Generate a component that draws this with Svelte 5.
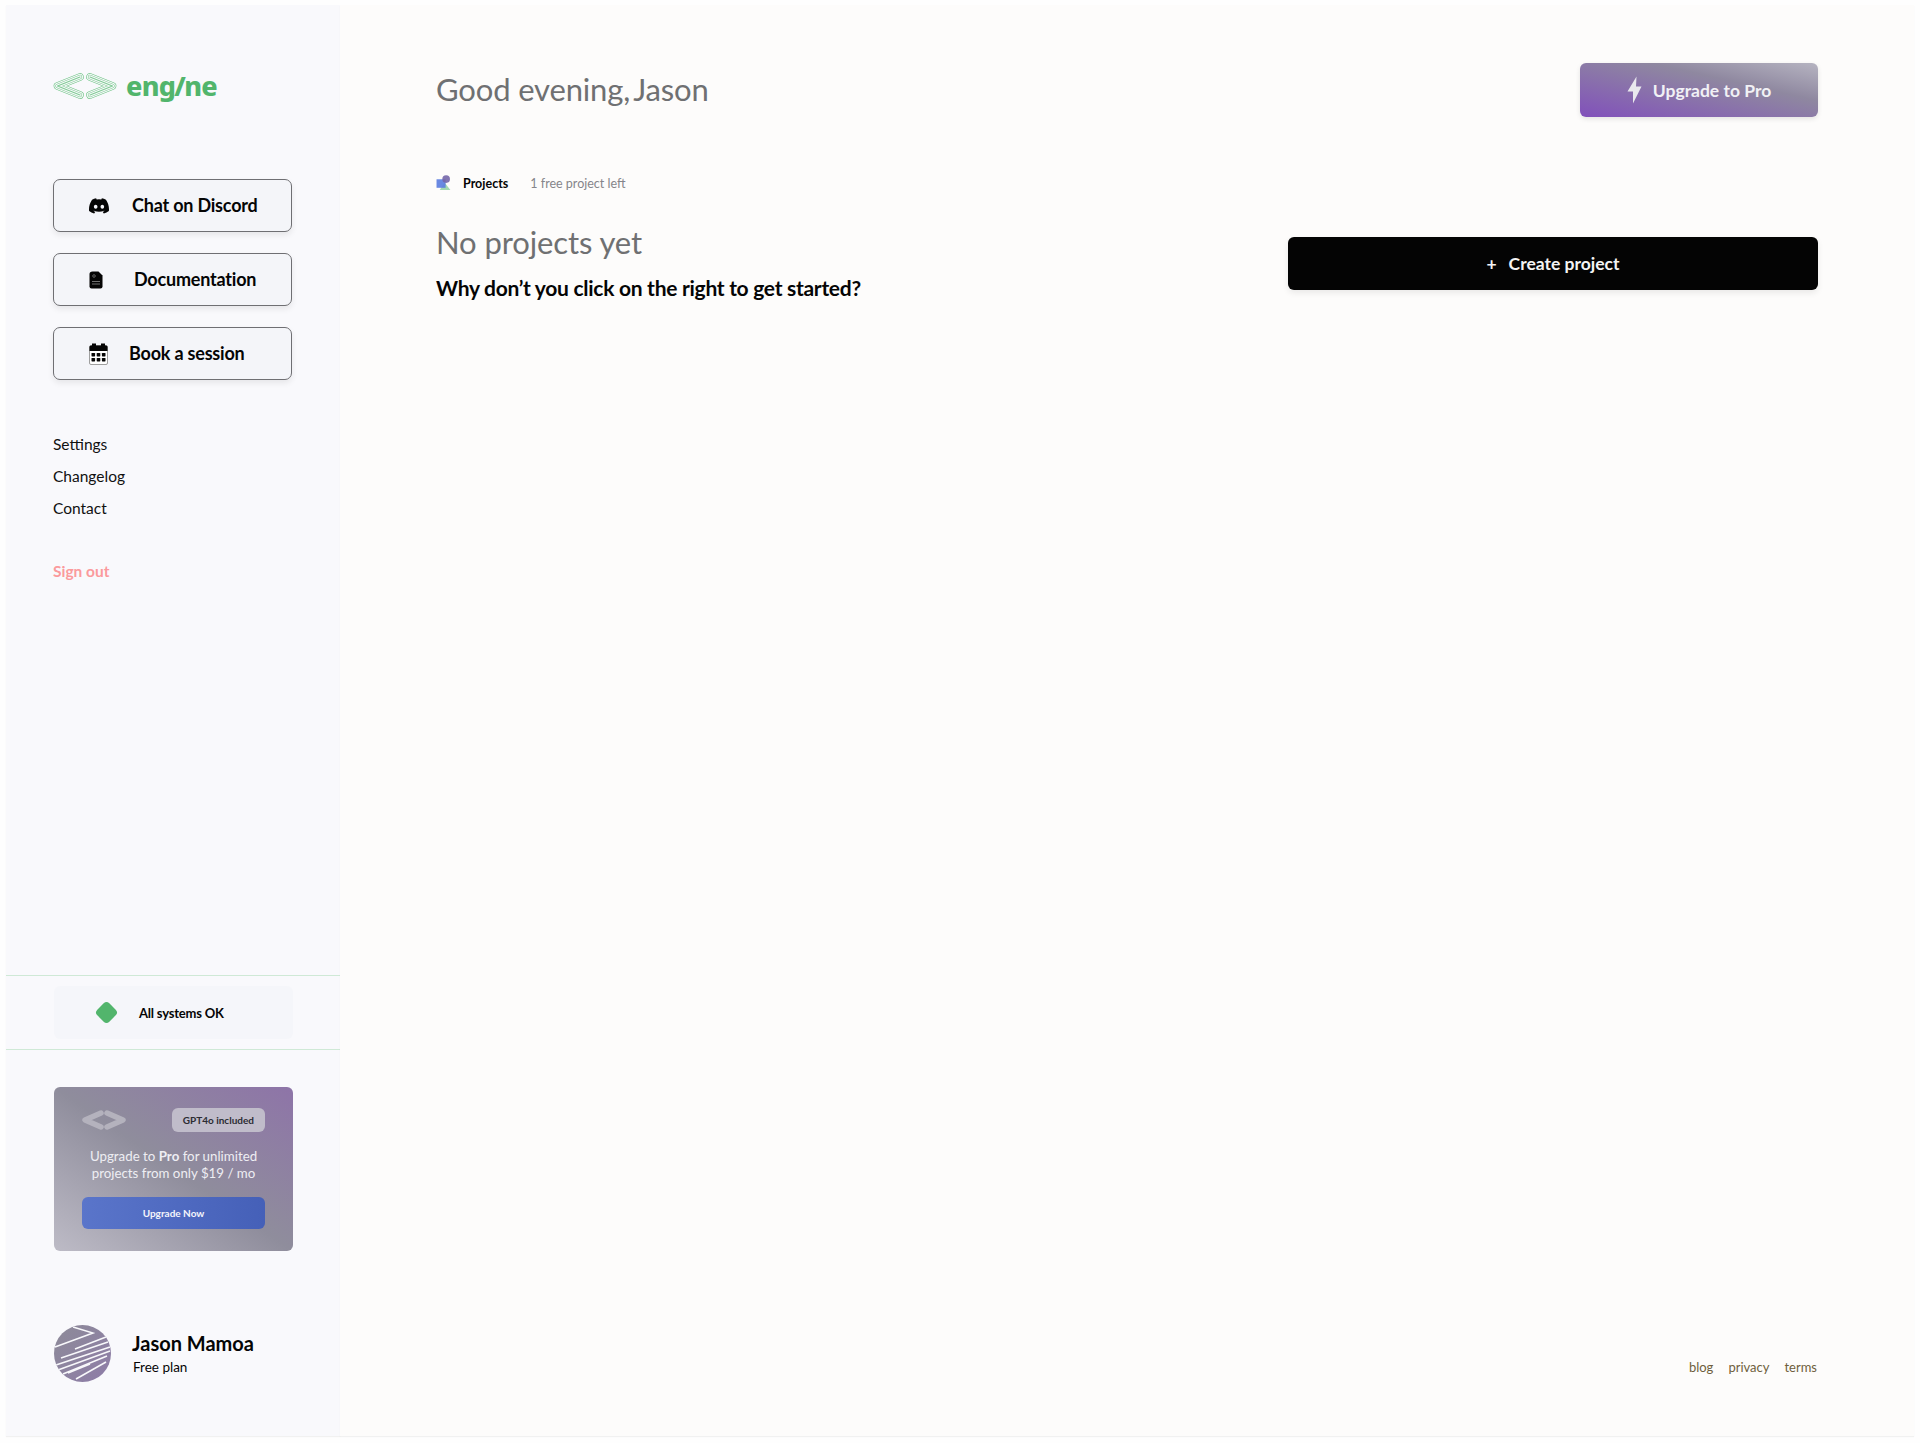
<script>
	const actions = [
		{ label: 'Chat on Discord', icon: 'discord', gap: 23 },
		{ label: 'Documentation', icon: 'doc', gap: 31 },
		{ label: 'Book a session', icon: 'calendar', gap: 21 }
	];
	const links = ['Settings', 'Changelog', 'Contact'];
	const footer = ['blog', 'privacy', 'terms'];
	// stripes across the avatar
	const stripes = [
		[19, 2, 39, 8, 1, 22],
		[52, 12, 21, 24],
		[54, 17, 7, 33],
		[56, 22, 2, 40],
		[56, 26, 4, 45],
		[53, 31, 9, 49],
		[52, 37, 22, 54],
		[36, 39, 14, 48]
	];
	// the logo's chevrons are stacked strokes, which gives the nested outlines
	const logoStrokes = [
		{ w: 7.6, c: '#6cc383' },
		{ w: 6.4, c: '#f9f9fc' },
		{ w: 4.4, c: '#7fcb93' },
		{ w: 3.2, c: '#f9f9fc' },
		{ w: 1.1, c: '#7fcb93' }
	];
</script>

<div class="page">
	<aside class="sidebar">
		<div class="logo">
			<svg class="logo-mark" viewBox="0 0 66 28" width="66" height="28" aria-hidden="true">
				<g fill="none" stroke-linecap="round" stroke-linejoin="round">
					{#each logoStrokes as s}
						<path d="M28 5 L5.5 14 L28 23 M38 5 L60.5 14 L38 23" stroke={s.c} stroke-width={s.w} />
					{/each}
				</g>
			</svg>
			<span class="logo-text">eng<em>/</em>ne</span>
		</div>

		<div class="actions">
			{#each actions as a}
				<button class="action" style="gap: {a.gap}px">
					<span class="action-icon">
						{#if a.icon === 'discord'}
							<svg viewBox="0 0 16 16" width="20" height="20" fill="#050505" aria-hidden="true">
								<path d="M13.545 2.907a13.227 13.227 0 0 0-3.257-1.011.05.05 0 0 0-.052.025c-.141.25-.297.577-.406.833a12.19 12.19 0 0 0-3.658 0 8.258 8.258 0 0 0-.412-.833.051.051 0 0 0-.052-.025c-1.125.194-2.22.534-3.257 1.011a.041.041 0 0 0-.021.018C.356 6.024-.213 9.047.066 12.032c.001.014.01.028.021.037a13.276 13.276 0 0 0 3.995 2.02.05.05 0 0 0 .056-.019c.308-.42.582-.863.818-1.329a.05.05 0 0 0-.01-.059.051.051 0 0 0-.018-.011 8.875 8.875 0 0 1-1.248-.595.05.05 0 0 1-.02-.066.051.051 0 0 1 .015-.019c.084-.063.168-.129.248-.195a.05.05 0 0 1 .051-.007c2.619 1.196 5.454 1.196 8.041 0a.052.052 0 0 1 .053.007c.08.066.164.132.248.195a.051.051 0 0 1-.004.085 8.254 8.254 0 0 1-1.249.594.05.05 0 0 0-.03.03.052.052 0 0 0 .003.041c.24.465.515.909.817 1.329a.05.05 0 0 0 .056.019 13.235 13.235 0 0 0 4.001-2.02.049.049 0 0 0 .021-.037c.334-3.451-.559-6.449-2.366-9.106a.034.034 0 0 0-.02-.019Zm-8.198 7.307c-.789 0-1.438-.724-1.438-1.612 0-.889.637-1.613 1.438-1.613.807 0 1.45.73 1.438 1.613 0 .888-.637 1.612-1.438 1.612Zm5.316 0c-.788 0-1.438-.724-1.438-1.612 0-.889.637-1.613 1.438-1.613.807 0 1.451.73 1.438 1.613 0 .888-.631 1.612-1.438 1.612Z" />
							</svg>
						{:else if a.icon === 'doc'}
							<svg viewBox="0 0 14 18" width="14" height="18" aria-hidden="true">
								<path d="M3.5 0.5 H9.5 L13.5 4.5 V15.5 Q13.5 17.5 11.5 17.5 H2.5 Q0.5 17.5 0.5 15.5 V3 Q0.5 0.5 3.5 0.5Z" fill="#050505" />
								<circle cx="5" cy="5" r="1.3" fill="none" stroke="#9a9a9a" stroke-width="0.6" />
								<path d="M3 10.5 H11 M3 13 H11" stroke="#8a8a8a" stroke-width="0.8" />
							</svg>
						{:else}
							<svg viewBox="0 0 19 22" width="19" height="22" aria-hidden="true">
								<rect x="0.5" y="2.5" width="18" height="19" rx="1.5" fill="#fff" stroke="#777" stroke-width="0.7" />
								<path d="M0.5 8 V4 Q0.5 2.5 2 2.5 H3 V0.5 H7 V2.5 H12 V0.5 H16 V2.5 H17 Q18.5 2.5 18.5 4 V8Z" fill="#050505" />
								<g fill="#050505">
									<rect x="2.5" y="10" width="3.6" height="3.4" rx="0.6" />
									<rect x="7.7" y="10" width="3.6" height="3.4" rx="0.6" />
									<rect x="12.9" y="10" width="3.6" height="3.4" rx="0.6" />
									<rect x="2.5" y="15" width="3.6" height="3.4" rx="0.6" />
									<rect x="7.7" y="15" width="3.6" height="3.4" rx="0.6" />
									<rect x="12.9" y="15" width="3.6" height="3.4" rx="0.6" />
								</g>
							</svg>
						{/if}
					</span>
					<span class="action-label">{a.label}</span>
				</button>
			{/each}
		</div>

		<nav class="nav">
			{#each links as l}
				<a href="#{l}">{l}</a>
			{/each}
			<a class="signout" href="#signout">Sign out</a>
		</nav>

		<div class="status-row">
			<div class="status">
				<span class="diamond"></span>
				<span>All systems OK</span>
			</div>
		</div>

		<div class="promo">
			<div class="promo-top">
				<svg viewBox="0 0 44 20" width="44" height="20" aria-hidden="true">
					<g fill="none" stroke="#b4b2bd" stroke-width="5.5" stroke-linecap="round" stroke-linejoin="round">
						<path d="M19 3 L3 10 L19 17" />
						<path d="M25 3 L41 10 L25 17" />
					</g>
				</svg>
				<span class="pill">GPT4o included</span>
			</div>
			<p>Upgrade to <b>Pro</b> for unlimited<br />projects from only $19 / mo</p>
			<button class="promo-btn">Upgrade Now</button>
		</div>

		<div class="user">
			<svg class="avatar" viewBox="0 0 57 57" width="57" height="57" aria-hidden="true">
				<defs>
					<linearGradient id="av" x1="0" y1="0" x2="1" y2="1">
						<stop offset="0" stop-color="#8d8b98" />
						<stop offset="1" stop-color="#8e7ca8" />
					</linearGradient>
					<clipPath id="avc"><circle cx="28.5" cy="28.5" r="28.5" /></clipPath>
				</defs>
				<circle cx="28.5" cy="28.5" r="28.5" fill="url(#av)" />
				<g clip-path="url(#avc)" fill="none" stroke="#f8f8fb" stroke-width="1.5">
					{#each stripes as s}
						<polyline points={s.join(' ')} />
					{/each}
				</g>
			</svg>
			<div>
				<div class="user-name">Jason Mamoa</div>
				<div class="user-plan">Free plan</div>
			</div>
		</div>
	</aside>

	<main class="main">
		<header class="top">
			<h1>Good evening,<span class="who">Jason</span></h1>
			<button class="upgrade">
				<svg viewBox="0 0 15 28" width="15" height="28" aria-hidden="true">
					<path d="M9.5 0.5 L0.5 15.5 H6 L6 27.5 L14.5 10.5 H9Z" fill="#e9e9ee" />
				</svg>
				Upgrade to Pro
			</button>
		</header>

		<div class="section-label">
			<svg viewBox="0 0 15 15" width="16" height="16" aria-hidden="true">
				<path d="M8 7 L13.5 14 H3.5Z" fill="#a3d9b1" />
				<rect x="0.5" y="4" width="8.5" height="8" fill="#5d7fe0" opacity="0.92" />
				<circle cx="9.5" cy="3.8" r="3.6" fill="#7466a8" opacity="0.9" />
			</svg>
			<strong>Projects</strong>
			<span>1 free project left</span>
		</div>

		<section class="empty">
			<div>
				<h2>No projects yet</h2>
				<p>Why don’t you click on the right to get started?</p>
			</div>
			<button class="create"><span class="plus">+</span>Create project</button>
		</section>

		<footer class="links">
			{#each footer as f}
				<a href="#{f}">{f}</a>
			{/each}
		</footer>
	</main>
</div>

<style>
	:global(body) {
		background: #fefefe;
		font-family: 'Lato', 'Open Sans', sans-serif;
		color: #050505;
	}

	.page {
		display: flex;
		height: 1443px;
		box-sizing: border-box;
		padding: 5px 6px 7px 6px;
	}

	.sidebar {
		width: 334px;
		flex: none;
		display: flex;
		flex-direction: column;
		background: #f9f9fc;
		box-shadow: 0 1px 1px rgba(0, 0, 0, 0.05);
	}

	.logo {
		display: flex;
		align-items: center;
		gap: 8px;
		margin: 64px 0 0 46px;
		height: 34px;
	}

	.logo-text {
		font-family: 'Noto Sans', sans-serif;
		font-weight: 800;
		font-size: 27px;
		line-height: 34px;
		letter-spacing: -0.7px;
		color: #52b56c;
	}

	.logo-text em {
		font-style: normal;
		margin: 0 -1px;
	}

	.actions {
		display: flex;
		flex-direction: column;
		gap: 21px;
		margin: 76px 0 0 47px;
		width: 239px;
	}

	.action {
		display: flex;
		align-items: center;
		height: 53px;
		padding: 0 0 0 35px;
		background: #f4f5f9;
		border: 1px solid #6f6f73;
		border-radius: 7px;
		box-shadow: 0 3px 6px rgba(0, 0, 0, 0.08);
		font: 700 18px 'Lato', sans-serif;
		letter-spacing: -0.2px;
		color: #050505;
	}

	.action-icon {
		display: flex;
		align-items: center;
	}

	.action-label {
		margin-top: -2px;
	}

	.nav {
		display: flex;
		flex-direction: column;
		margin: 48px 0 0 47px;
	}

	.nav a {
		font-size: 15.5px;
		line-height: 32px;
		color: #111;
		text-decoration: none;
	}

	.nav .signout {
		margin-top: 31px;
		font-weight: 700;
		color: #fb9a9c;
	}

	.status-row {
		margin-top: auto;
		border-top: 1px solid #cfe9d6;
		border-bottom: 1px solid #cfe9d6;
		padding: 10px 0;
	}

	.status {
		display: flex;
		align-items: center;
		gap: 24px;
		box-sizing: border-box;
		width: 239px;
		height: 53px;
		margin-left: 48px;
		padding-left: 44px;
		background: #f5f6fa;
		border-radius: 6px;
		font-size: 13px;
		letter-spacing: -0.2px;
		font-weight: 700;
	}

	.diamond {
		width: 17px;
		height: 17px;
		background: #52b56c;
		border-radius: 4px;
		transform: rotate(45deg);
	}

	.promo {
		box-sizing: border-box;
		width: 239px;
		height: 164px;
		margin: 37px 0 0 48px;
		padding: 21px 28px 0;
		border-radius: 6px;
		background: linear-gradient(to top right, #bdbbc6 0%, #8f8d9c 50%, #8e74a8 100%);
		color: #eeeef3;
	}

	.promo-top {
		display: flex;
		align-items: center;
		justify-content: space-between;
	}

	.pill {
		padding: 0 11px;
		height: 24px;
		line-height: 24px;
		border-radius: 6px;
		background: #c0bcca;
		color: #2c2c33;
		font-size: 10px;
		font-weight: 700;
	}

	.promo p {
		margin: 16px -8px 0;
		text-align: center;
		font-size: 13.3px;
		line-height: 17px;
	}

	.promo-btn {
		display: block;
		width: 100%;
		height: 32px;
		margin-top: 15px;
		border: none;
		border-radius: 6px;
		background: linear-gradient(to right, #5a75ca, #4560b8);
		color: #f4f5fb;
		font: 700 10px 'Lato', sans-serif;
	}

	.user {
		display: flex;
		align-items: center;
		gap: 21px;
		margin: 74px 0 54px 48px;
	}

	.user-name {
		font-size: 20px;
		font-weight: 700;
		line-height: 26px;
	}

	.user-plan {
		font-size: 13.5px;
		line-height: 20px;
		margin-top: 1px;
		margin-left: 1px;
	}

	.main {
		flex: 1;
		display: flex;
		flex-direction: column;
		background: #fdfcfb;
		padding: 58px 96px 0 96px;
		box-shadow: 0 1px 1px rgba(0, 0, 0, 0.05);
	}

	.top {
		display: flex;
		justify-content: space-between;
		align-items: center;
	}

	h1,
	h2 {
		margin: 0;
		font-weight: 400;
		font-size: 31px;
		color: #6f7072;
	}

	h1 {
		letter-spacing: -0.15px;
		transform: translateY(-1px);
	}

	.who {
		margin-left: 3px;
	}

	.upgrade {
		display: flex;
		align-items: center;
		justify-content: center;
		gap: 11px;
		width: 238px;
		height: 54px;
		border: none;
		border-radius: 6px;
		background: linear-gradient(to top right, #8150bb 0%, #8f88a0 65%, #b6b4c1 100%);
		box-shadow: 0 2px 5px rgba(0, 0, 0, 0.1);
		color: #f1f1f5;
		font: 700 17.5px 'Lato', sans-serif;
	}

	.section-label {
		display: flex;
		align-items: center;
		margin-top: 57px;
		height: 18px;
		font-size: 12.5px;
	}

	.section-label strong {
		margin-left: 11px;
	}

	.section-label span {
		margin-left: 22px;
		color: #85858a;
	}

	.empty {
		display: flex;
		justify-content: space-between;
		align-items: flex-start;
		margin-top: 32px;
	}

	.empty h2 {
		line-height: 36px;
		letter-spacing: -0.1px;
	}

	.empty p {
		margin: 15px 0 0;
		font-size: 21px;
		letter-spacing: -0.28px;
		font-weight: 700;
		color: #050505;
	}

	.create {
		display: flex;
		align-items: center;
		justify-content: center;
		width: 530px;
		height: 53px;
		margin-top: 13px;
		border: none;
		border-radius: 6px;
		background: #040404;
		box-shadow: 0 3px 6px rgba(0, 0, 0, 0.08);
		color: #f4f4f4;
		font: 700 17.5px 'Lato', sans-serif;
	}

	.plus {
		margin-right: 12px;
	}

	.links {
		display: flex;
		justify-content: flex-end;
		gap: 15px;
		margin-top: auto;
		margin-bottom: 61px;
		transform: translateX(-1px);
	}

	.links a {
		font-size: 13px;
		line-height: 16px;
		color: #6f5f3c;
		text-decoration: none;
	}
</style>
